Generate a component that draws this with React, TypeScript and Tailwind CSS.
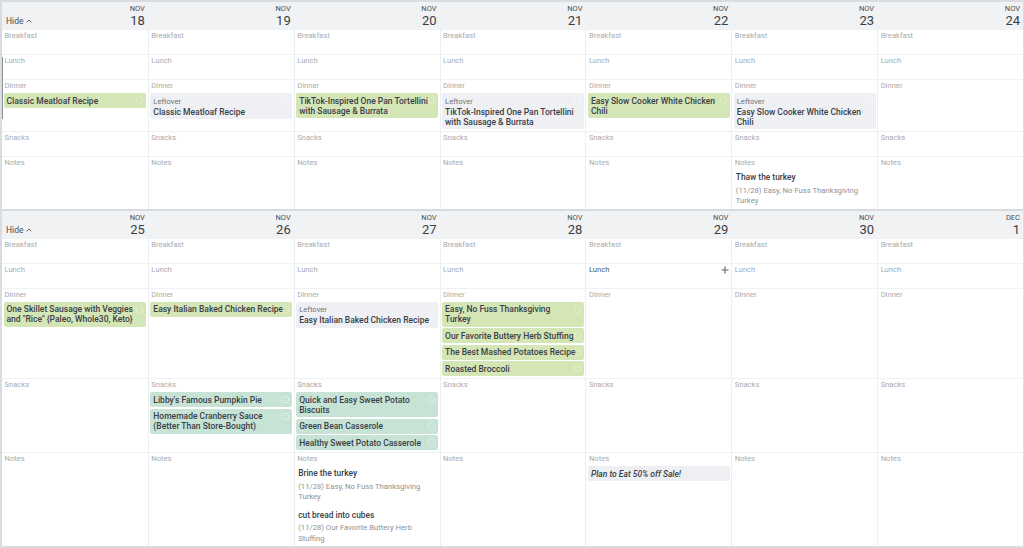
import React from 'react';
import { ChevronUp } from 'lucide-react';

type Tone = 'green' | 'teal' | 'leftover' | 'plain';

interface Item {
  tone: Tone;
  lines: string[];
  italic?: boolean;
}

interface Note {
  title: string;
  sub: string[];
}

interface Day {
  month: string;
  day: number;
  dinner?: Item[];
  snacks?: Item[];
  notes?: Note[];
  noteItems?: Item[];
  hoverLunch?: boolean;
}

const WEEK_ONE: Day[] = [
  { month: 'NOV', day: 18, dinner: [{ tone: 'green', lines: ['Classic Meatloaf Recipe'] }] },
  { month: 'NOV', day: 19, dinner: [{ tone: 'leftover', lines: ['Classic Meatloaf Recipe'] }] },
  { month: 'NOV', day: 20, dinner: [{ tone: 'green', lines: ['TikTok-Inspired One Pan Tortellini', 'with Sausage & Burrata'] }] },
  { month: 'NOV', day: 21, dinner: [{ tone: 'leftover', lines: ['TikTok-Inspired One Pan Tortellini', 'with Sausage & Burrata'] }] },
  { month: 'NOV', day: 22, dinner: [{ tone: 'green', lines: ['Easy Slow Cooker White Chicken', 'Chili'] }] },
  {
    month: 'NOV',
    day: 23,
    dinner: [{ tone: 'leftover', lines: ['Easy Slow Cooker White Chicken', 'Chili'] }],
    notes: [{ title: 'Thaw the turkey', sub: ['(11/28) Easy, No Fuss Thanksgiving', 'Turkey'] }],
  },
  { month: 'NOV', day: 24 },
];

const WEEK_TWO: Day[] = [
  { month: 'NOV', day: 25, dinner: [{ tone: 'green', lines: ['One Skillet Sausage with Veggies', 'and "Rice" {Paleo, Whole30, Keto}'] }] },
  {
    month: 'NOV',
    day: 26,
    dinner: [{ tone: 'green', lines: ['Easy Italian Baked Chicken Recipe'] }],
    snacks: [
      { tone: 'teal', lines: ["Libby's Famous Pumpkin Pie"] },
      { tone: 'teal', lines: ['Homemade Cranberry Sauce', '(Better Than Store-Bought)'] },
    ],
  },
  {
    month: 'NOV',
    day: 27,
    dinner: [{ tone: 'leftover', lines: ['Easy Italian Baked Chicken Recipe'] }],
    snacks: [
      { tone: 'teal', lines: ['Quick and Easy Sweet Potato', 'Biscuits'] },
      { tone: 'teal', lines: ['Green Bean Casserole'] },
      { tone: 'teal', lines: ['Healthy Sweet Potato Casserole'] },
    ],
    notes: [
      { title: 'Brine the turkey', sub: ['(11/28) Easy, No Fuss Thanksgiving', 'Turkey'] },
      { title: 'cut bread into cubes', sub: ['(11/28) Our Favorite Buttery Herb', 'Stuffing'] },
    ],
  },
  {
    month: 'NOV',
    day: 28,
    dinner: [
      { tone: 'green', lines: ['Easy, No Fuss Thanksgiving', 'Turkey'] },
      { tone: 'green', lines: ['Our Favorite Buttery Herb Stuffing'] },
      { tone: 'green', lines: ['The Best Mashed Potatoes Recipe'] },
      { tone: 'green', lines: ['Roasted Broccoli'] },
    ],
  },
  { month: 'NOV', day: 29, hoverLunch: true, noteItems: [{ tone: 'plain', lines: ['Plan to Eat 50% off Sale!'], italic: true }] },
  { month: 'NOV', day: 30 },
  { month: 'DEC', day: 1 },
];

const toneClass: Record<Tone, string> = {
  green: 'bg-[#d4e5b6]',
  teal: 'bg-[#c7e3d6]',
  leftover: 'bg-[#eef0f3]',
  plain: 'bg-[#eeeff2]',
};

const Handle = () => (
  <svg width="9" height="9" viewBox="0 0 9 9" className="absolute right-[2px] top-[3px]">
    <circle cx="4.5" cy="4.5" r="3.3" fill="none" stroke="#ffffff" strokeWidth="1" strokeDasharray="1 1.1" opacity="0.85" />
  </svg>
);

const MealItem = ({ item }: { item: Item }) => (
  <div className={`relative rounded-[2px] px-[3px] py-[2.5px] text-[8.5px] leading-[10px] font-medium text-[#3a4047] whitespace-nowrap ${toneClass[item.tone]} ${item.italic ? 'italic' : ''}`}>
    {item.tone === 'leftover' && (
      <div className="text-[7.6px] leading-[11px] font-normal text-[#6e7276]">Leftover</div>
    )}
    {item.lines.map((l) => (
      <div key={l}>{l}</div>
    ))}
    {item.tone !== 'plain' && <Handle />}
  </div>
);

const NoteBlock = ({ note, first }: { note: Note; first: boolean }) => (
  <div className={first ? 'mt-[3px]' : 'mt-[6px]'}>
    <div className="pl-[2px] text-[8.4px] leading-[12px] font-medium text-[#3a4047]">{note.title}</div>
    <div className="pl-[2px] mt-[2.5px] text-[7.7px] leading-[10.5px] text-[#8e9194]">
      {note.sub.map((s) => (
        <div key={s}>{s}</div>
      ))}
    </div>
  </div>
);

type Meal = 'Breakfast' | 'Lunch' | 'Dinner' | 'Snacks' | 'Notes';
const MEALS: Meal[] = ['Breakfast', 'Lunch', 'Dinner', 'Snacks', 'Notes'];

const Cell = ({ day, meal, col }: { day: Day; meal: Meal; col: number }) => {
  const items = meal === 'Dinner' ? day.dinner : meal === 'Snacks' ? day.snacks : meal === 'Notes' ? day.noteItems : undefined;
  const hover = meal === 'Lunch' && day.hoverLunch;
  return (
    <div className={`relative min-h-[25px] border-t border-[#f0f1f2] px-[1.5px] pb-[2px] ${col > 0 ? 'border-l border-l-[#edeef0]' : ''}`}>
      <div className={`pl-[1px] text-[7.6px] leading-[11px] ${hover ? 'text-[#55585c]' : 'text-[#a8abaf]'}`}>{meal}</div>
      {items && (
        <div className="mt-[2px] flex flex-col gap-[1.5px]">
          {items.map((it) => (
            <MealItem key={it.lines[0]} item={it} />
          ))}
        </div>
      )}
      {meal === 'Notes' && day.notes && day.notes.map((n, i) => <NoteBlock key={n.title} note={n} first={i === 0} />)}
      {hover && (
        <svg width="8" height="8" viewBox="0 0 8 8" className="absolute right-[2px] top-[2px]">
          <path d="M4 0.5v7M0.5 4h7" stroke="#8b8e92" strokeWidth="1.6" />
        </svg>
      )}
    </div>
  );
};

const Week = ({ days, last }: { days: Day[]; last?: boolean }) => (
  <div
    className={`grid grid-cols-7 ${
      last ? 'flex-1 grid-rows-[auto_auto_auto_auto_auto_1fr]' : 'border-b-2 border-[#d7dadf]'
    }`}
  >
    {days.map((d, i) => (
      <div key={`h-${d.day}`} className="h-[27px] bg-[#f1f2f4] flex items-end justify-between pr-[3px]">
        {i === 0 ? (
          <div className="mb-[3px] ml-[4px] flex items-center gap-[2px] text-[8.5px] leading-[10px] text-[#4a4e53]">
            Hide
            <ChevronUp size={8} strokeWidth={2.5} />
          </div>
        ) : (
          <span />
        )}
        <div className="flex flex-col items-end self-stretch pt-[2px]">
          <div className="text-[7.5px] leading-[9px] text-[#4a4e53]">{d.month}</div>
          <div className="text-[13px] leading-[15px] text-[#3a3e43]">{d.day}</div>
        </div>
      </div>
    ))}
    {MEALS.map((m) => days.map((d, i) => <Cell key={`${m}-${d.day}`} day={d} meal={m} col={i} />))}
  </div>
);

export default function App() {
  return (
    <div
      className="relative w-[1024px] h-[548px] bg-white border-t-2 border-l-2 border-b-2 border-r border-[#d9dce0] flex flex-col overflow-hidden"
      style={{ fontFamily: 'Roboto, "Liberation Sans", Arial, sans-serif' }}
    >
      <Week days={WEEK_ONE} />
      <Week days={WEEK_TWO} last />
      <div className="absolute left-0 top-[55px] h-[62px] w-[1px] bg-[#8c9096]" />
    </div>
  );
}
